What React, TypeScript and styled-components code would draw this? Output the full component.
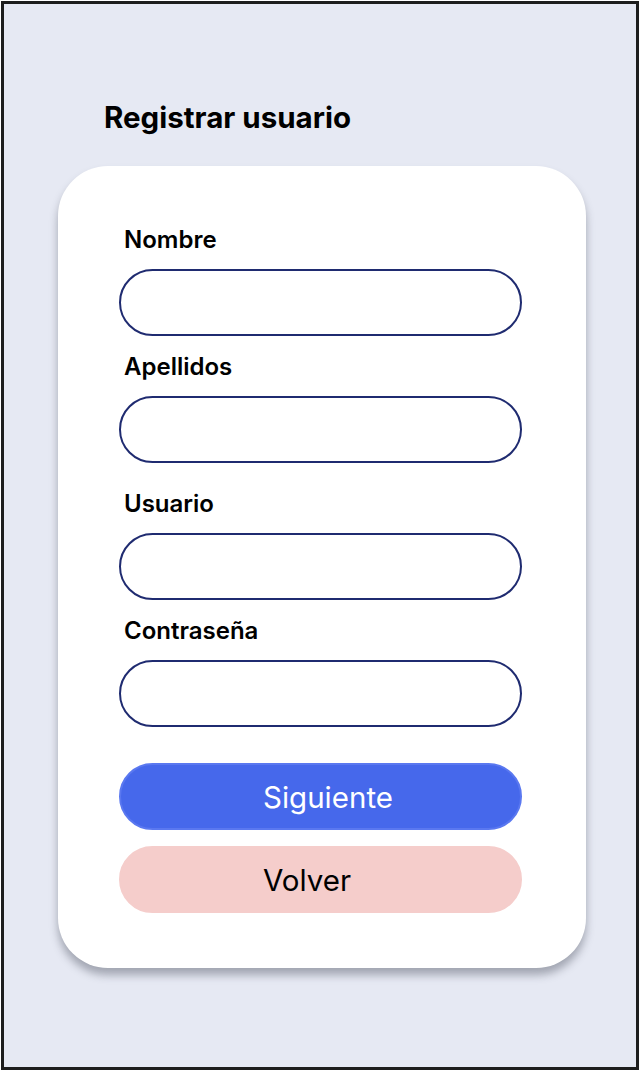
import styled, { createGlobalStyle } from 'styled-components';

const GlobalStyle = createGlobalStyle`
  body {
    margin: 0;
    background: #ffffff;
    font-family: Inter, 'Noto Sans', sans-serif;
  }
  * {
    box-sizing: border-box;
  }
`;

const FIELDS = [
  { id: 1, label: 'Nombre', type: 'text', gap: 16 },
  { id: 2, label: 'Apellidos', type: 'text', gap: 16 },
  { id: 3, label: 'Usuario', type: 'text', gap: 26 },
  { id: 4, label: 'Contraseña', type: 'password', gap: 16 },
];

const App = () => {
  return (
    <Frame>
      <GlobalStyle />
      <Title>Registrar usuario</Title>
      <Card>
        <FieldList>
          {FIELDS.map(({ id, label, type, gap }) => (
            <Field key={id} $top={gap}>
              <Label>{label}</Label>
              <Input type={type} />
            </Field>
          ))}
        </FieldList>
        <Buttons>
          <Button $variant="primary">Siguiente</Button>
          <Button $variant="secondary">Volver</Button>
        </Buttons>
      </Card>
    </Frame>
  );
};

const Frame = styled.div`
  display: flex;
  flex-direction: column;
  width: 638px;
  height: 1069px;
  margin: 1px 3px 2px 1px;
  border: 3px solid #1d1d1d;
  background: #e6e9f3;
  padding-top: 95px;
`;

const Title = styled.h1`
  margin: 0 0 31px 100px;
  font-size: 29.5px;
  font-weight: 700;
  line-height: 36px;
  color: #000;
`;

const Card = styled.div`
  display: flex;
  flex-direction: column;
  width: 528px;
  height: 802px;
  margin-left: 54px;
  padding: 59px 63px 0 61px;
  background: #ffffff;
  border-radius: 50px;
  box-shadow: 0 7px 9px rgba(60, 64, 80, 0.4);
`;

const FieldList = styled.div`
  display: flex;
  flex-direction: column;
`;

const Field = styled.div<{ $top: number }>`
  display: flex;
  flex-direction: column;
  margin-top: ${p => p.$top}px;
  &:first-child {
    margin-top: 0;
  }
`;

const Label = styled.label`
  margin-left: 5px;
  margin-bottom: 15px;
  font-size: 24px;
  font-weight: 600;
  line-height: 29px;
  color: #000;
`;

const Input = styled.input`
  width: 403px;
  height: 67px;
  padding: 0 24px;
  border: 2px solid #1f2b70;
  border-radius: 34px;
  background: #fff;
  font-family: inherit;
  font-size: 20px;
  outline: none;
`;

const Buttons = styled.div`
  display: flex;
  flex-direction: column;
  gap: 16px;
  margin-top: 36px;
`;

const Button = styled.button<{ $variant: 'primary' | 'secondary' }>`
  width: 403px;
  height: 67px;
  padding: 0 0 0 142px;
  border-radius: 34px;
  border: 2px solid
    ${p => (p.$variant === 'primary' ? '#5a78f0' : '#f5cdcb')};
  background: ${p => (p.$variant === 'primary' ? '#4668eb' : '#f5cdcb')};
  color: ${p => (p.$variant === 'primary' ? '#ffffff' : '#000000')};
  font-family: Inter, 'Noto Sans', sans-serif;
  font-size: 29.5px;
  font-weight: 400;
  text-align: left;
  cursor: pointer;
`;

export default App;
